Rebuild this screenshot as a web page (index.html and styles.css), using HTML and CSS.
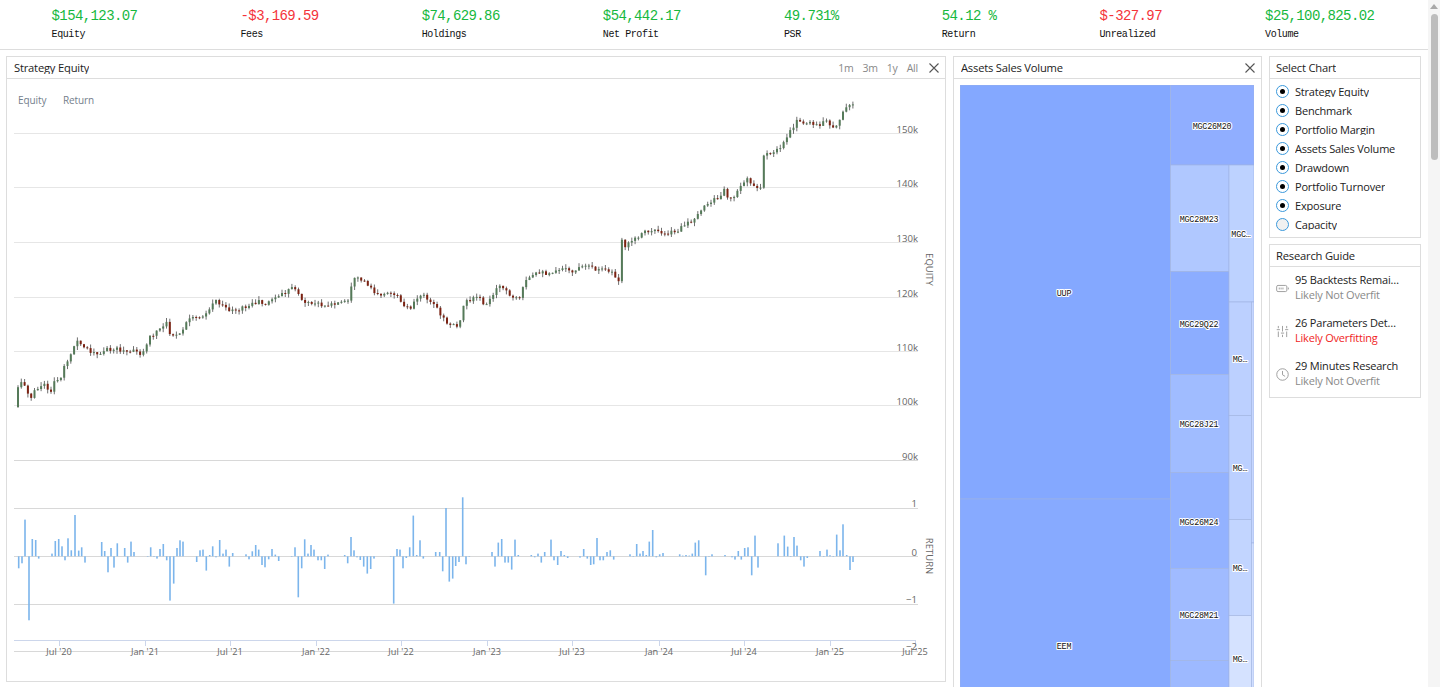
FILE: index.html
```html
<!DOCTYPE html>
<html lang="en">
<head>
<meta charset="utf-8">
<title>Backtest Results</title>
<link rel="stylesheet" href="styles.css">
</head>
<body>
<div class="page">
  <header class="stats">
    <div class="stat"><div class="value up">$154,123.07</div><div class="label">Equity</div></div>
    <div class="stat"><div class="value down">-$3,169.59</div><div class="label">Fees</div></div>
    <div class="stat"><div class="value up">$74,629.86</div><div class="label">Holdings</div></div>
    <div class="stat"><div class="value up">$54,442.17</div><div class="label">Net Profit</div></div>
    <div class="stat"><div class="value up">49.731%</div><div class="label">PSR</div></div>
    <div class="stat"><div class="value up">54.12 %</div><div class="label">Return</div></div>
    <div class="stat"><div class="value down">$-327.97</div><div class="label">Unrealized</div></div>
    <div class="stat"><div class="value up">$25,100,825.02</div><div class="label">Volume</div></div>
  </header>
  <main class="workspace">
    <section class="panel panel-chart">
      <div class="panel-head">
        <span class="panel-title">Strategy Equity</span>
        <div class="head-tools">
          <span class="range">1m</span><span class="range">3m</span><span class="range">1y</span><span class="range">All</span>
          <svg class="close close-chart" viewBox="0 0 10 10"><path d="M.5.5l9 9M9.5.5l-9 9"/></svg>
        </div>
      </div>
      <svg class="chart" viewBox="7 79 938 602">
        <g class="legend">
          <text x="18" y="104">Equity</text>
          <text x="63" y="104">Return</text>
        </g>
        <g class="grid">
          <path d="M14 133.5H918M14 187.5H918M14 242.5H918M14 297.5H918M14 351.5H918M14 405.5H918"/>
          <path class="grid-strong" d="M14 460.5H918M14 508.5H918M14 604.5H918M14 651.5H918M14 556.5H918"/>
          <path class="x-axis" d="M14 640.5H916M59.500 640V646M145.500 640V646M230.500 640V646M316.500 640V646M401.500 640V646M487.500 640V646M572.500 640V646M659.500 640V646M744.500 640V646M830.500 640V646M915.500 640V646"/>
        </g>
        <g id="candles"></g>
        <g id="bars" class="bars"></g>
        <g class="y-labels">
          <text x="918" y="133">150k</text>
          <text x="918" y="187">140k</text>
          <text x="918" y="242">130k</text>
          <text x="918" y="297">120k</text>
          <text x="918" y="351">110k</text>
          <text x="918" y="405">100k</text>
          <text x="918" y="460">90k</text>
          <text x="917" y="507">1</text>
          <text x="917" y="556">0</text>
          <text x="917" y="603">−1</text>
          <text x="917" y="650">−2</text>
        </g>
        <g class="x-labels">
          <text x="59" y="655">Jul '20</text>
          <text x="145" y="655">Jan '21</text>
          <text x="230" y="655">Jul '21</text>
          <text x="316" y="655">Jan '22</text>
          <text x="401" y="655">Jul '22</text>
          <text x="487" y="655">Jan '23</text>
          <text x="572" y="655">Jul '23</text>
          <text x="659" y="655">Jan '24</text>
          <text x="744" y="655">Jul '24</text>
          <text x="830" y="655">Jan '25</text>
          <text x="915" y="655">Jul '25</text>
        </g>
        <g class="axis-titles">
          <text transform="translate(926 269.500) rotate(90)">EQUITY</text>
          <text transform="translate(926 556) rotate(90)">RETURN</text>
        </g>
      </svg>
    </section>

    <section class="panel panel-assets">
      <div class="panel-head">
        <span class="panel-title">Assets Sales Volume</span>
        <svg class="close" viewBox="0 0 10 10"><path d="M.5.5l9 9M9.5.5l-9 9"/></svg>
      </div>
      <div class="treemap-wrap">
        <svg class="treemap" viewBox="960 85 294 720">
          <g class="cells">
            <rect x="960" y="85" width="210.500" height="414" fill="#84a8ff"/>
            <rect x="960" y="499" width="210.500" height="306" fill="#87aaff"/>
            <rect x="1170.500" y="85" width="83.500" height="80" fill="#90aeff"/>
            <rect x="1170.500" y="165" width="58.500" height="106.500" fill="#b0c8ff"/>
            <rect x="1170.500" y="271.500" width="58.500" height="103" fill="#8cadff"/>
            <rect x="1170.500" y="374.500" width="58.500" height="98" fill="#a0bcff"/>
            <rect x="1170.500" y="472.500" width="58.500" height="96" fill="#93b2ff"/>
            <rect x="1170.500" y="568.500" width="58.500" height="92" fill="#a0bbff"/>
            <rect x="1170.500" y="660.500" width="58.500" height="144" fill="#9db9ff"/>
            <rect x="1229" y="165" width="25" height="137" fill="#bdd2ff"/>
            <rect x="1229" y="302" width="22.500" height="113.500" fill="#bcd0ff"/>
            <rect x="1229" y="415.500" width="22.500" height="104" fill="#bcd0ff"/>
            <rect x="1229" y="519.500" width="22.500" height="96" fill="#c2d5ff"/>
            <rect x="1229" y="615.500" width="22.500" height="190" fill="#d5e2ff"/>
            <rect x="1251.500" y="302" width="2.500" height="241" fill="#c5d6ff"/>
            <rect x="1251.500" y="543" width="2.500" height="262" fill="#d0deff"/>
          </g>
          <g class="cell-labels">
            <text x="1064" y="296">UUP</text>
            <text x="1064" y="649">EEM</text>
            <text x="1212" y="129">MGC26M20</text>
            <text x="1199" y="222">MGC28M23</text>
            <text x="1199" y="327">MGC29Q22</text>
            <text x="1199" y="427">MGC28J21</text>
            <text x="1199" y="525">MGC26M24</text>
            <text x="1199" y="618">MGC28M21</text>
            <text x="1241" y="237">MGC…</text>
            <text x="1240" y="362">MG…</text>
            <text x="1240" y="471">MG…</text>
            <text x="1240" y="571">MG…</text>
            <text x="1240" y="662">MG…</text>
          </g>
        </svg>
      </div>
    </section>

    <aside class="sidebar">
      <section class="panel">
        <div class="panel-head"><span class="panel-title">Select Chart</span></div>
        <ul class="radios">
          <li class="radio-row"><span class="radio checked"></span><span class="radio-text">Strategy Equity</span></li>
          <li class="radio-row"><span class="radio checked"></span><span class="radio-text">Benchmark</span></li>
          <li class="radio-row"><span class="radio checked"></span><span class="radio-text">Portfolio Margin</span></li>
          <li class="radio-row"><span class="radio checked"></span><span class="radio-text">Assets Sales Volume</span></li>
          <li class="radio-row"><span class="radio checked"></span><span class="radio-text">Drawdown</span></li>
          <li class="radio-row"><span class="radio checked"></span><span class="radio-text">Portfolio Turnover</span></li>
          <li class="radio-row"><span class="radio checked"></span><span class="radio-text">Exposure</span></li>
          <li class="radio-row"><span class="radio"></span><span class="radio-text">Capacity</span></li>
        </ul>
      </section>
      <section class="panel">
        <div class="panel-head"><span class="panel-title">Research Guide</span></div>
        <ul class="guide">
          <li class="guide-row">
            <svg class="guide-icon" viewBox="0 0 14 14"><rect x=".7" y="3.700" width="11" height="6.600" rx="1.500"/><path d="M3.500 6v2M5.500 6v2M7.500 6v2M13.300 6v2"/></svg>
            <div class="guide-text"><div class="guide-name">95 Backtests Remaining</div><div class="muted">Likely Not Overfit</div></div>
          </li>
          <li class="guide-row">
            <svg class="guide-icon" viewBox="0 0 14 14"><path d="M2.500 1v2.500M2.500 7v6M7 1v6M7 10.500V13M11.500 1v2.500M11.500 7v6M.8 5h3.400M5.300 8.700h3.400M9.800 5h3.400"/></svg>
            <div class="guide-text"><div class="guide-name">26 Parameters Detected</div><div class="alert">Likely Overfitting</div></div>
          </li>
          <li class="guide-row">
            <svg class="guide-icon" viewBox="0 0 14 14"><circle cx="7" cy="7" r="6.200"/><path d="M7 3.200V7.300L9.800 9"/></svg>
            <div class="guide-text"><div class="guide-name">29 Minutes Research</div><div class="muted">Likely Not Overfit</div></div>
          </li>
        </ul>
      </section>
    </aside>
  </main>
</div>
<div class="scrollbar">
  <svg class="scroll-arrow" viewBox="0 0 8 5"><path d="M4 0l4 5H0z"/></svg>
  <div class="scroll-thumb"></div>
</div>
<script src="app.js"></script>
</body>
</html>
```

FILE: styles.css
```css
* { box-sizing: border-box; }
html, body { margin: 0; padding: 0; }
body {
  display: flex;
  height: 100vh;
  overflow: hidden;
  background: #fff;
  color: #222;
  font-family: "Open Sans", "Noto Sans", sans-serif;
  font-size: 11px;
}
.page { flex: 1; min-width: 0; }

.stats {
  display: flex;
  justify-content: space-around;
  align-items: flex-start;
  height: 50px;
  padding: 9px 2px 0 0;
  border-bottom: 1px solid #ddd;
  font-family: "Liberation Mono", monospace;
}
.value { font-size: 14px; line-height: 15px; letter-spacing: -.6px; }
.up { color: #17b83e; }
.down { color: #f4333a; }
.label { margin-top: 5px; font-size: 10px; line-height: 11px; letter-spacing: -.42px; color: #111; }

.workspace {
  display: flex;
  align-items: flex-start;
  gap: 7px;
  padding: 6px 0 0 6px;
}
.panel { background: #fff; border: 1px solid #ddd; }
.panel-chart { width: 940px; height: 626px; }
.panel-assets { width: 309px; }
.sidebar { display: flex; flex-direction: column; gap: 6px; width: 152px; }
.sidebar .panel-head { padding-left: 6px; }

.panel-head {
  display: flex;
  justify-content: space-between;
  align-items: center;
  height: 22px;
  padding: 0 6px 0 7px;
  border-bottom: 1px solid #ddd;
}
.panel-title {
  display: block;
  height: 14px;
  margin-bottom: 2px;
  overflow: hidden;
  font-size: 11.200px;
  letter-spacing: -.2px;
  line-height: 15px;
  color: #222;
}
.head-tools { display: flex; align-items: center; gap: 9px; }
.range { font-size: 10.500px; letter-spacing: -.2px; color: #888; }
.close { width: 10px; height: 10px; fill: none; stroke: #555; stroke-width: 1.100; }
.close-chart { margin-left: 2px; }

.chart { display: block; width: 938px; height: 602px; }
.legend text { font-size: 10px; letter-spacing: -.1px; fill: #74808c; }
.grid path { fill: none; stroke: #e6e6e6; stroke-width: 1; }
.grid .grid-strong { stroke: #d8d8d8; }
.grid .x-axis { stroke: #ccd6eb; }
.bars { fill: #7cb5ec; }
.y-labels text { font-size: 9.600px; fill: #666; text-anchor: end; }
.x-labels text { font-size: 9.200px; fill: #666; text-anchor: middle; }
.axis-titles text { font-size: 9.500px; fill: #666; text-anchor: middle; }

.treemap-wrap { padding: 6px 7px 0 6px; }
.treemap { display: block; width: 294px; height: 720px; }
.cells rect { stroke: #9fb3e0; stroke-width: .6; }
.cell-labels text {
  font-family: "Liberation Mono", monospace;
  font-size: 8.400px;
  letter-spacing: -.2px;
  fill: #111;
  text-anchor: middle;
  stroke: #fff;
  stroke-width: 2.200px;
  paint-order: stroke;
  stroke-linejoin: round;
}

.radios, .guide { list-style: none; margin: 0; padding: 0; }
.radios { padding: 3px 0 3px 6px; }
.radio-row { display: flex; align-items: flex-start; gap: 6px; height: 19px; padding-top: 3px; }
.radio {
  position: relative;
  flex: none;
  width: 13px;
  height: 13px;
  border: 1.300px solid #3b99dc;
  border-radius: 50%;
  background: #f1f1f1;
}
.radio.checked { background: #fff; }
.radio.checked::after {
  content: "";
  position: absolute;
  top: 2.700px;
  left: 2.700px;
  width: 5px;
  height: 5px;
  border-radius: 50%;
  background: #000;
}
.radio-text {
  display: block;
  height: 12px;
  overflow: hidden;
  font-size: 11px;
  letter-spacing: -.2px;
  line-height: 14px;
  color: #222;
  white-space: nowrap;
}

.guide { padding: 0 0 1px 6px; }
.guide-row { display: flex; align-items: center; gap: 6px; height: 43px; }
.guide-icon { flex: none; width: 13px; height: 13px; fill: none; stroke: #999; stroke-width: 1; }
.guide-text { width: 105px; min-width: 0; margin-top: -4px; font-size: 11px; letter-spacing: -.2px; line-height: 15px; }
.guide-name { overflow: hidden; white-space: nowrap; text-overflow: ellipsis; }
.muted { color: #8a8a8a; }
.alert { color: #f02424; }

.scrollbar { position: relative; flex: none; width: 12px; background: #f5f5f5; }
.scroll-arrow { display: block; width: 8px; height: 5px; margin: 4px auto 0; fill: #a8a8a8; }
.scroll-thumb { width: 7px; height: 146px; margin: 5px auto 0; border-radius: 4px; background: #bdbdbd; }
```

FILE: app.js
```js
// Equity path as [x, y] pairs in page pixels, plus monthly return bars.
(function () {
  var path = [[16,407],[18,386],[22,384],[25,385],[29,394],[32,400],[35,390],[39,387],[45,386],[52,392],[55,380],[60,378],[62,372],[66,362],[70,356],[73,358],[75,336],[78,345],[82,345],[87,350],[93,352],[100,353],[104,352],[108,348],[113,349],[118,349],[124,352],[130,352],[137,352],[140,353],[147,345],[150,338],[156,332],[162,328],[167,324],[170,333],[175,337],[180,335],[185,325],[190,320],[200,316],[205,314],[212,305],[216,299],[222,307],[230,310],[240,309],[247,307],[258,301],[265,304],[275,298],[285,293],[297,287],[300,300],[310,304],[330,305],[345,302],[350,302],[352,281],[360,279],[368,284],[375,292],[385,295],[393,292],[400,300],[410,310],[415,297],[425,295],[435,305],[445,322],[452,325],[460,324],[463,305],[470,299],[478,296],[487,306],[497,285],[505,290],[512,299],[521,300],[524,283],[535,275],[550,272],[560,268],[570,272],[585,267],[600,270],[612,272],[618,279],[619,279],[620,237],[626,247],[634,240],[645,233],[655,229],[665,233],[678,231],[690,222],[700,210],[715,200],[725,190],[730,200],[745,180],[752,182],[760,190],[762,190],[764,152],[772,152],[782,145],[790,130],[797,122],[810,124],[815,125],[826,122],[834,130],[840,118],[847,107],[853,103]];

  var ret1 = [[56,-36],[66,-21],[75,110],[87,-192],[97,52],[107,49],[116,-7],[156,8],[166,46],[176,52],[186,30],[195,-12],[204,54],[214,18],[225,124],[236,17],[245,27],[255,-19],[305,43],[314,16],[324,-48],[333,25],[342,-34],[352,39],[374,25],[383,-19],[393,44],[402,13],[443,1],[452,27],[462,1],[471,-7],[480,22],[490,37],[500,-12],[510,-133],[521,-82],[531,25],[540,48],[549,44],[590,-17],[600,18],[609,20],[619,-43],[629,4],[638,30],[648,-3],[659,49],[669,8],[678,20],[688,-31],[698,10],[738,6],[747,-9],[757,15],[767,34],[776,20],[786,-26],[795,-33],[806,-9],[816,22],[826,5],[836,-14],[875,1],[885,27],[895,-123],[905,-36],[914,51],[924,8],[933,34],[942,20],[954,-12],[964,-12],[974,-38],[984,5],[1034,4],[1043,-21],[1053,58],[1062,18],[1071,-3],[1081,-11],[1091,-31],[1102,-52],[1112,-38],[1122,-7],[1172,1],[1181,-142],[1191,22],[1200,20],[1209,-36],[1219,-5],[1229,27],[1240,122],[1250,4],[1260,48],[1270,-7],[1307,13],[1319,13],[1328,-45],[1338,145],[1348,-76],[1358,-67],[1367,-29],[1377,-17],[1388,177],[1398,-24],[1408,1]];
  var ret2 = [[36,13],[45,-31],[55,41],[65,52],[75,-19],[85,-19],[95,-40],[105,50],[115,4],[154,4],[164,-3],[174,8],[184,-19],[194,13],[213,50],[222,-12],[233,-26],[243,16],[253,4],[263,-5],[300,-4],[311,22],[322,-7],[332,-26],[341,-24],[351,55],[360,-12],[370,-12],[381,13],[391,18],[401,-10],[450,6],[460,1],[470,37],[480,8],[489,16],[499,4],[508,44],[518,79],[529,-3],[539,6],[549,10],[599,6],[608,2],[618,4],[628,2],[637,8],[646,41],[656,48],[677,-57],[687,1],[696,6],[735,4],[756,-3],[765,-10],[775,16],[784,-10],[794,25],[804,27],[815,-57],[825,62],[834,-34],[894,39],[913,62],[923,29],[932,1],[942,58],[951,32],[962,-12],[972,-31],[982,-5],[1020,16],[1031,1],[1041,20],[1050,3],[1060,1],[1070,65],[1080,18],[1089,96],[1100,4],[1110,-41],[1119,-17]];

  var NS = "http://www.w3.org/2000/svg";
  var seed = 17;
  function rnd() {
    seed = (seed * 1103515245 + 12345) % 2147483648;
    return seed / 2147483648;
  }
  function add(parent, tag, attrs) {
    var el = document.createElementNS(NS, tag);
    for (var k in attrs) el.setAttribute(k, attrs[k]);
    parent.appendChild(el);
  }
  function yAt(x) {
    for (var i = 1; i < path.length; i++) {
      if (x <= path[i][0]) {
        var a = path[i - 1], b = path[i];
        return a[1] + (b[1] - a[1]) * (x - a[0]) / (b[0] - a[0]);
      }
    }
    return path[path.length - 1][1];
  }

  var candles = document.getElementById("candles");
  var prev = 407;
  for (var x = 18; x <= 853; x += 3.3) {
    var last = yAt(x) + (rnd() - 0.5) * 5;
    var upper = Math.min(prev, last), lower = Math.max(prev, last);
    add(candles, "path", {
      d: "M" + x.toFixed(1) + " " + (upper - rnd() * 4).toFixed(1) + "V" + (lower + rnd() * 4).toFixed(1),
      stroke: "#4a4a4a", "stroke-width": "0.8", fill: "none"
    });
    add(candles, "rect", {
      x: (x - 1).toFixed(1), y: upper.toFixed(1), width: "2",
      height: Math.max(lower - upper, 1).toFixed(1),
      fill: last <= prev ? "#557a59" : "#7c2212"
    });
    prev = last;
  }

  var bars = document.getElementById("bars");
  function drawBars(list, offset) {
    list.forEach(function (b) {
      var h = Math.abs(b[1]) / 3;
      add(bars, "rect", {
        x: (offset + b[0] / 3 - 0.8).toFixed(1),
        y: (b[1] > 0 ? 556.3 - h : 556.3).toFixed(1),
        width: "1.6", height: Math.max(h, 0.5).toFixed(1)
      });
    });
  }
  drawBars(ret1, 0);
  drawBars(ret2, 480);
})();
```
